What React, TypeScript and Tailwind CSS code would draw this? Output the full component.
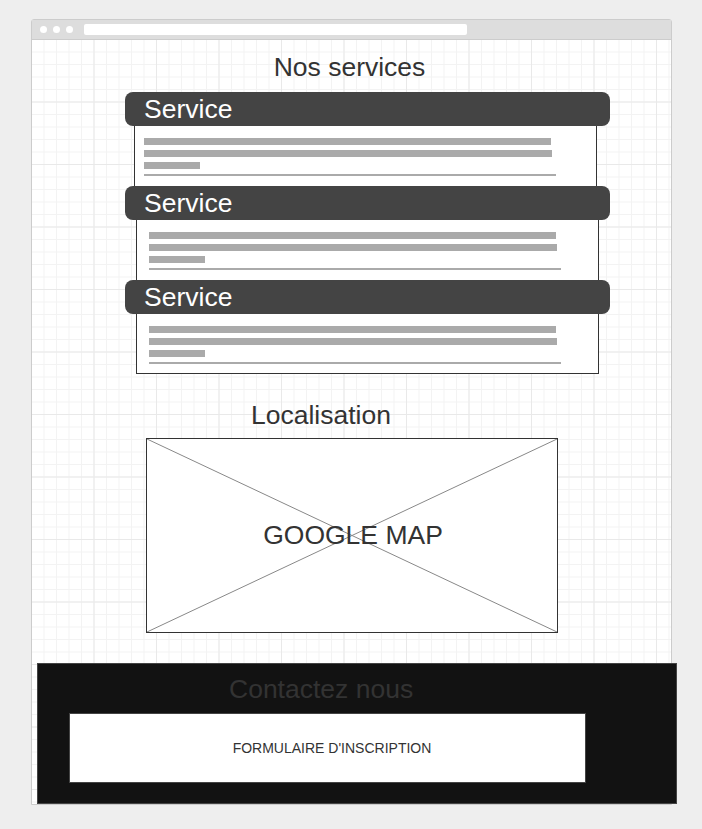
import React from 'react';

const BARS = [
  { w: 'w-[407px]', h: 'h-[7px]' },
  { w: 'w-[408px]', h: 'h-[7px]' },
  { w: 'w-[56px]', h: 'h-[7px]' },
  { w: 'w-[412px]', h: 'h-[2px]' },
];

function TextBars({ inset }: { inset: string }) {
  return (
    <div className={`flex flex-col gap-[5px] pt-[12px] ${inset}`}>
      {BARS.map((b, i) => (
        <div key={i} className={`${b.w} ${b.h} bg-[#aaaaaa]`} />
      ))}
    </div>
  );
}

function ServiceCard({
  bodyClass,
  inset,
  last,
}: {
  bodyClass: string;
  inset: string;
  last?: boolean;
}) {
  return (
    <div className="flex flex-col">
      <div className="ml-[93px] w-[485px] h-[34px] rounded-lg bg-[#444444] pl-[19px] text-[26.5px] leading-[34px] text-white">
        Service
      </div>
      <div
        className={`${bodyClass} border-x border-[#333333] bg-white ${
          last ? 'h-[60px] border-b' : 'h-[60px]'
        }`}
      >
        <TextBars inset={inset} />
      </div>
    </div>
  );
}

export default function App() {
  return (
    <div className="min-h-[829px] bg-[#eeeeee] pt-[19px] font-['Liberation_Sans',Arial,sans-serif]">
      <div className="ml-[31px] w-[641px] h-[786px] rounded-t-[3px] border border-[#cccccc] flex flex-col">
        {/* browser chrome */}
        <div className="h-[20px] shrink-0 bg-[#dddddd] border-b border-[#cccccc] flex items-center pl-[8px] gap-[6px]">
          <span className="w-[7px] h-[7px] rounded-full bg-white" />
          <span className="w-[7px] h-[7px] rounded-full bg-white" />
          <span className="w-[7px] h-[7px] rounded-full bg-white" />
          <span className="ml-[5px] w-[383px] h-[11px] rounded-[2px] bg-white" />
        </div>

        {/* canvas */}
        <div className="flex-1 flex flex-col bg-white bg-[linear-gradient(to_right,#e9e9e9_1px,transparent_1px),linear-gradient(to_bottom,#e9e9e9_1px,transparent_1px),linear-gradient(to_right,#f3f3f3_1px,transparent_1px),linear-gradient(to_bottom,#f3f3f3_1px,transparent_1px)] bg-size-[62.5px_62.5px,62.5px_62.5px,12.5px_12.5px,12.5px_12.5px] bg-position-[-1px_-1px]">
          <h1 className="mt-[12px] h-[30px] pr-[4px] text-center text-[26.5px] leading-[30px] text-[#333333]">
            Nos services
          </h1>

          <div className="mt-[10px] flex flex-col">
            <ServiceCard bodyClass="ml-[102px] w-[463px]" inset="pl-[9px]" />
            <ServiceCard bodyClass="ml-[104px] w-[463px]" inset="pl-[12px]" />
            <ServiceCard bodyClass="ml-[104px] w-[463px]" inset="pl-[12px]" last />
          </div>

          <h2 className="mt-[26px] h-[30px] pl-[219px] text-[26.5px] leading-[30px] text-[#333333]">
            Localisation
          </h2>

          <div className="relative mt-[8px] ml-[114px] w-[412px] h-[195px] border border-[#333333] bg-white flex items-center justify-center">
            <svg
              className="absolute inset-0 w-full h-full"
              preserveAspectRatio="none"
              viewBox="0 0 100 100"
            >
              <line x1="0" y1="0" x2="100" y2="100" stroke="#888888" strokeWidth="1" vectorEffect="non-scaling-stroke" />
              <line x1="100" y1="0" x2="0" y2="100" stroke="#888888" strokeWidth="1" vectorEffect="non-scaling-stroke" />
            </svg>
            <span className="relative pl-[2px] text-[26.5px] text-[#333333]">GOOGLE MAP</span>
          </div>

          {/* footer */}
          <div className="mt-auto ml-[5px] w-[640px] h-[141px] border border-[#444444] bg-[#121212] shrink-0">
            <div className="pt-[10px] h-[40px] pl-[191px] text-[26.5px] leading-[30px] text-[#333333]">
              Contactez nous
            </div>
            <div className="mt-[9px] ml-[31px] w-[517px] h-[70px] border border-[#444444] bg-white flex items-center justify-center pl-[9px] text-[14px] text-[#333333]">
              FORMULAIRE D&apos;INSCRIPTION
            </div>
          </div>
        </div>
      </div>
    </div>
  );
}
